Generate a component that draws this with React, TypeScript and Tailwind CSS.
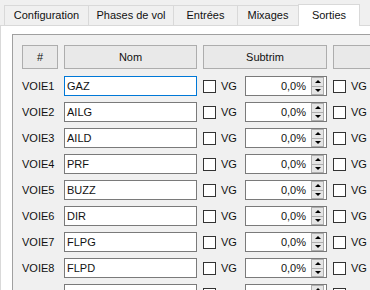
import React from 'react';

const tabs = [
  { label: 'Configuration', w: 'w-[85px]' },
  { label: 'Phases de vol', w: 'w-[86px]' },
  { label: 'Entrées', w: 'w-[65px]' },
  { label: 'Mixages', w: 'w-[62px]' },
];

const rows = [
  { id: 'VOIE1', name: 'GAZ', focus: true },
  { id: 'VOIE2', name: 'AILG' },
  { id: 'VOIE3', name: 'AILD' },
  { id: 'VOIE4', name: 'PRF' },
  { id: 'VOIE5', name: 'BUZZ' },
  { id: 'VOIE6', name: 'DIR' },
  { id: 'VOIE7', name: 'FLPG' },
  { id: 'VOIE8', name: 'FLPD' },
];

const HeaderButton: React.FC<{ label: string }> = ({ label }) => (
  <div className="h-[24px] flex items-center justify-center bg-[#e9e9e9] border border-[#adadad] text-[#111]">
    {label}
  </div>
);

const CheckBox: React.FC<{ label?: string }> = ({ label }) => (
  <div className="flex items-center gap-[5px]">
    <div className="w-[13px] h-[13px] bg-white border border-[#333]" />
    {label && <span className="text-[#111]">{label}</span>}
  </div>
);

const SpinBox: React.FC<{ value?: string }> = ({ value }) => (
  <div className="w-[82px] h-[20px] bg-white border border-[#7a7a7a] flex items-center justify-end pr-[2px]">
    {value && <span className="mr-[5px] text-[#111]">{value}</span>}
    <div className="w-[13px] h-[18px] flex flex-col bg-[#e5e5e5] border border-[#adadad]">
      <div className="flex-1 flex items-center justify-center border-b border-[#adadad]">
        <div className="w-0 h-0 border-l-[3px] border-r-[3px] border-b-[3px] border-l-transparent border-r-transparent border-b-black" />
      </div>
      <div className="flex-1 flex items-center justify-center">
        <div className="w-0 h-0 border-l-[3px] border-r-[3px] border-t-[3px] border-l-transparent border-r-transparent border-t-black" />
      </div>
    </div>
  </div>
);

const App: React.FC = () => {
  return (
    <div
      className="w-[370px] h-[290px] overflow-hidden bg-[#f0f0f0] text-[11px] leading-none"
      style={{ fontFamily: '"Liberation Sans", Arial, sans-serif' }}
    >
      {/* Tab bar */}
      <div className="h-[25px] flex items-end pl-[4px] relative z-10">
        {tabs.map((t) => (
          <div
            key={t.label}
            className={`${t.w} h-[20px] -ml-px first:ml-0 flex items-center justify-center bg-[#f0f0f0] border border-b-0 border-[#d9d9d9] text-[#111]`}
          >
            {t.label}
          </div>
        ))}
        <div className="w-[62px] h-[22px] -mb-px -ml-px flex items-center justify-center bg-white border border-b-0 border-[#d9d9d9] text-[#111]">
          Sorties
        </div>
      </div>

      {/* Panel */}
      <div className="h-[265px] bg-white border-t border-l border-[#d9d9d9] pl-[11px] pt-[8px]">
        <div className="h-full bg-[#f0f0f0] border-t border-l border-[#a0a0a0] pl-[9px] pt-[10px]">
          <div className="grid grid-cols-[36px_133px_124px_124px] gap-x-[6px] gap-y-[6px] items-center">
            <HeaderButton label="#" />
            <HeaderButton label="Nom" />
            <HeaderButton label="Subtrim" />
            <HeaderButton label="" />

            {rows.map((r, i) => (
              <React.Fragment key={r.id}>
                <div className={`text-[#111] ${i === 0 ? 'mt-[1px]' : ''}`}>{r.id}</div>
                <div
                  className={`h-[20px] bg-white border flex items-center pl-[2px] text-[#111] ${
                    r.focus ? 'border-[#0078d7]' : 'border-[#7a7a7a]'
                  } ${i === 0 ? 'mt-[1px]' : ''}`}
                >
                  {r.name}
                </div>
                <div className={`flex items-center justify-between ${i === 0 ? 'mt-[1px]' : ''}`}>
                  <CheckBox label="VG" />
                  <SpinBox value="0,0%" />
                </div>
                <div className={`flex items-center ${i === 0 ? 'mt-[1px]' : ''}`}>
                  <CheckBox label="VG" />
                </div>
              </React.Fragment>
            ))}

            {/* partially visible ninth row */}
            <div />
            <div className="h-[20px] bg-white border border-[#7a7a7a]" />
            <div className="flex items-center justify-between">
              <CheckBox />
              <SpinBox />
            </div>
            <div className="flex items-center">
              <CheckBox />
            </div>
          </div>
        </div>
      </div>
    </div>
  );
};

export default App;
